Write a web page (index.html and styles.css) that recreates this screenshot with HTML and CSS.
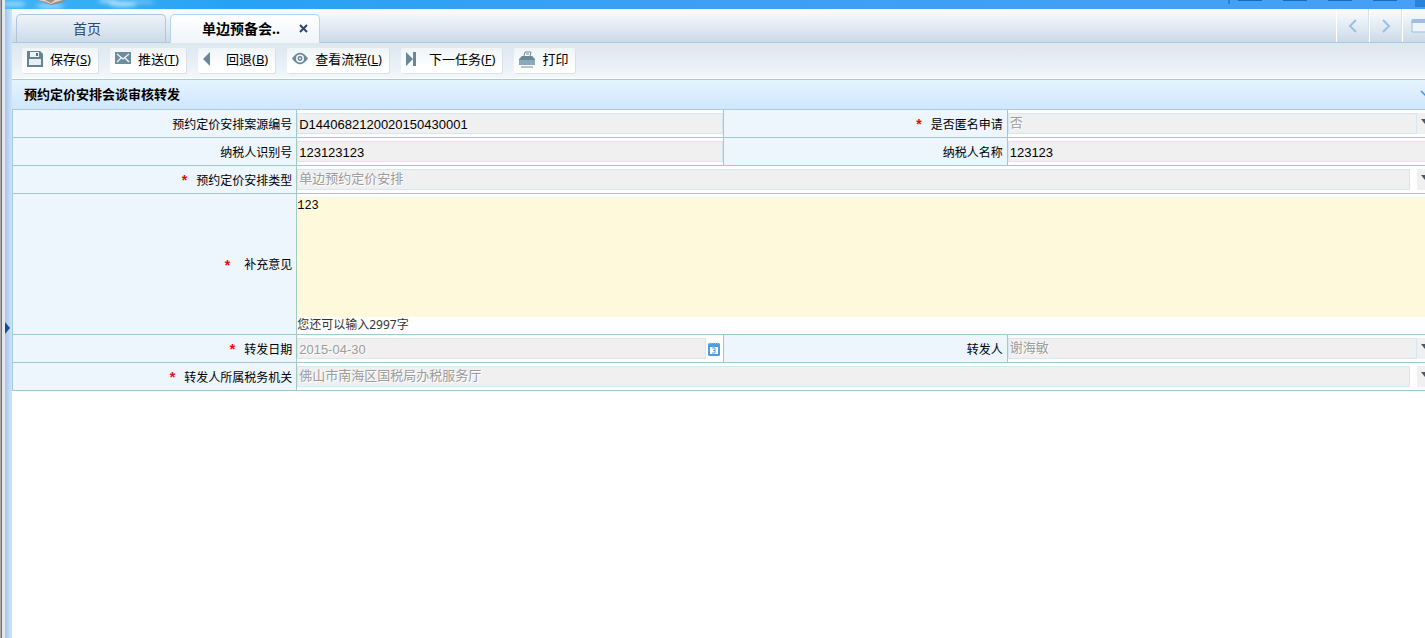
FILE: index.html
```html
<!DOCTYPE html>
<html lang="zh-CN">
<head>
<meta charset="utf-8">
<title>预约定价安排会谈审核转发</title>
<link rel="stylesheet" href="styles.css">
</head>
<body>
<div class="edge"></div>
<div class="app">
  <header class="banner">
    <svg class="banner-sky" width="330" height="9" viewBox="0 0 330 9" aria-hidden="true">
      <defs><filter id="soft" x="-20%" y="-80%" width="140%" height="260%"><feGaussianBlur stdDeviation="2"/></filter></defs>
      <g filter="url(#soft)" fill="#a9defb"><ellipse cx="9" cy="4" rx="12" ry="2"/><ellipse cx="45" cy="6" rx="14" ry="2"/><ellipse cx="103" cy="1" rx="10" ry="2"/><ellipse cx="118" cy="4" rx="14" ry="3"/><ellipse cx="138" cy="2" rx="12" ry="2" opacity=".5"/></g>
      <path d="M31 0h30l-6 3-9 2-8-3z" fill="#8b8d8d"/><path d="M33 0h25l-7 2-5 2-5-2z" fill="#d9d2c9"/><path d="M40 0h10l-4 3z" fill="#a18c7a"/>
    </svg>
    <svg class="banner-tools" width="197" height="9" viewBox="0 0 197 9" aria-hidden="true"><path d="M1 0v4" stroke="#0a67bd"/><path d="M10 0h24M55 0h24M100 0h24M145 0h24" stroke="#146cc0" stroke-width="2"/><path d="M187 0h10v7h-10z" fill="#2684da"/></svg>
  </header>
  <div class="body">
    <div class="splitter"><button class="splitter-handle" aria-label="展开侧栏"></button></div>
    <main class="content">
      <nav class="tabs">
        <button class="tab tab-home">首页</button>
        <div class="tab tab-active"><span>单边预备会..</span>
          <button class="tab-close" aria-label="关闭"><svg width="9" height="9" viewBox="0 0 9 9"><path d="M1 1l7 7M8 1l-7 7" stroke="#34436b" stroke-width="2"/></svg></button>
        </div>
        <div class="tab-tools">
          <button class="tab-tool" aria-label="向左"><svg width="10" height="14" viewBox="0 0 10 14"><path d="M8 1L2 7l6 6" fill="none" stroke="#9dbfe0" stroke-width="2"/></svg></button>
          <button class="tab-tool" aria-label="向右"><svg width="10" height="14" viewBox="0 0 10 14"><path d="M2 1l6 6-6 6" fill="none" stroke="#9dbfe0" stroke-width="2"/></svg></button>
          <button class="tab-tool" aria-label="窗口"><svg width="16" height="14" viewBox="0 0 16 14"><path d="M1 2h14v11H1z" fill="#eef4fa" stroke="#9dbfe0" stroke-width="1"/><path d="M1 0h14l1 4H0z" fill="#9dbfe0"/></svg></button>
        </div>
      </nav>
      <div class="toolbar">
        <button class="tool"><svg width="17" height="17" viewBox="0 0 17 17"><path d="M0 0h13l3 3v13H0z" fill="#678291"/><path d="M2 8h12v6H2z" fill="#e6eff4"/><path d="M3 1h9v5H3z" fill="#edf4f7"/><path d="M9 2h2v3H9z" fill="#526d7d"/></svg><span>保存(<u>S</u>)</span></button>
        <button class="tool"><svg width="17" height="17" viewBox="0 0 17 17"><path d="M0 1h16v12H0z" fill="#6d8c9e"/><path d="M2 3l6 5 6-5M2 11l4-4M14 11l-4-4" fill="none" stroke="#eef5f8" stroke-width="1.3"/></svg><span>推送(<u>T</u>)</span></button>
        <button class="tool"><svg width="17" height="17" viewBox="0 0 17 17"><path d="M7 1v14L0 8z" fill="#688798"/></svg><span>回退(<u>B</u>)</span></button>
        <button class="tool"><svg width="17" height="17" viewBox="0 0 17 17"><path d="M0 7.500Q8-4 16 7.500 8 19 0 7.500z" fill="#6d899a"/><circle cx="8" cy="7.500" r="4" fill="#f2f7fa"/><circle cx="8" cy="7.500" r="2.400" fill="#617e90"/><circle cx="8" cy="7.500" r="1" fill="#fff"/></svg><span>查看流程(<u>L</u>)</span></button>
        <button class="tool"><svg width="17" height="17" viewBox="0 0 17 17"><path d="M0 1v14l7-7V1h3v14H7V8L0 1z" fill="#688798"/></svg><span>下一任务(<u>F</u>)</span></button>
        <button class="tool"><svg width="17" height="17" viewBox="0 0 17 17"><path d="M5 5l1-4h6l-1 4" fill="#fff" stroke="#708996"/><path d="M7 3h3" stroke="#708996"/><path d="M3 5h10l3 3v6H0V8z" fill="#8aa9ba"/><path d="M3 5h10l3 4H0z" fill="#67879a"/><path d="M2 16h12" stroke="#708996"/></svg><span>打印</span></button>
      </div>
      <section class="panel">
        <header class="panel-head"><h1 class="panel-title">预约定价安排会谈审核转发</h1>
          <svg class="panel-toggle" width="14" height="8" viewBox="0 0 14 8" aria-hidden="true"><path d="M1 1l6 6 6-6" fill="none" stroke="#3e95dc" stroke-width="1.500"/></svg></header>
        <form class="form">
          <div class="label"><label for="caseno">预约定价安排案源编号</label></div>
          <div class="cell"><input class="field" id="caseno" value="D1440682120020150430001" readonly></div>
          <div class="label"><i class="star">*</i><label for="anon">是否匿名申请</label></div>
          <div class="cell"><select class="field pick" id="anon" disabled><option>否</option></select><span class="arrow"></span></div>

          <div class="label"><label for="taxid">纳税人识别号</label></div>
          <div class="cell"><input class="field" id="taxid" value="123123123" readonly></div>
          <div class="label"><label for="taxname">纳税人名称</label></div>
          <div class="cell"><input class="field" id="taxname" value="123123" readonly></div>

          <div class="label"><i class="star">*</i><label for="kind">预约定价安排类型</label></div>
          <div class="cell cell-wide"><select class="field pick" id="kind" disabled><option>单边预约定价安排</option></select><span class="arrow"></span></div>

          <div class="label label-note"><i class="star">*</i><label for="note">补充意见</label></div>
          <div class="cell cell-note"><textarea class="note" id="note">123</textarea><p class="hint">您还可以输入2997字</p></div>

          <div class="label"><i class="star">*</i><label for="date">转发日期</label></div>
          <div class="cell cell-date"><input class="field field-off" id="date" value="2015-04-30" disabled>
            <svg width="12" height="14" viewBox="0 0 12 14" aria-hidden="true"><rect x="0" y="1" width="12" height="13" rx="1.500" fill="#4f9ee0"/><path d="M2 5h8v7H2z" fill="#fff"/><path d="M1 1h1M3 1h1M5 1h1M7 1h1M9 1h1" stroke="#b9dcf6"/><path d="M4 6h3v5H4M5 8.500h2" fill="none" stroke="#4f9ee0"/></svg></div>
          <div class="label"><label for="person">转发人</label></div>
          <div class="cell"><select class="field pick" id="person" disabled><option>谢海敏</option></select><span class="arrow"></span></div>

          <div class="label"><i class="star">*</i><label for="office">转发人所属税务机关</label></div>
          <div class="cell cell-wide"><select class="field pick" id="office" disabled><option>佛山市南海区国税局办税服务厅</option></select><span class="arrow"></span></div>
        </form>
      </section>
    </main>
  </div>
</div>
</body>
</html>
```

FILE: styles.css
```css
* { box-sizing: border-box; }
body {
  margin: 0;
  min-height: 100vh;
  display: flex;
  overflow: hidden;
  background: #fff;
  color: #000;
  font: 12px/16px "Noto Sans", "Noto Sans CJK SC", sans-serif;
}
button, input, select, textarea { margin: 0; font: inherit; color: inherit; border-radius: 0; }
button { border: 0; padding: 0; background: none; }
svg { display: block; flex: none; }

.edge { width: 5px; flex: none; background: linear-gradient(90deg, #aaa 0 1px, #6e6e6e 1px 2px, #e4e8ec 2px 5px); }
.app { flex: 1; min-width: 0; display: flex; flex-direction: column; }
.banner {
  height: 9px;
  display: flex;
  justify-content: space-between;
  background: linear-gradient(90deg, #3eb4f5, #27a2f3 16%, #3ba0f4 45%, #489ff5);
}
.body { flex: 1; display: flex; min-height: 0; }
.splitter {
  width: 7px;
  flex: none;
  display: flex;
  align-items: center;
  padding-top: 8px;
  background: linear-gradient(90deg, #a5c7ed, #cfe4fb);
}
.splitter-handle {
  border: 6px solid transparent;
  border-left: 5px solid #13508f;
  border-right: 0;
}
.content { flex: 1; min-width: 0; overflow: hidden; }

.tabs {
  height: 34px;
  display: flex;
  align-items: flex-end;
  gap: 4px;
  padding-left: 4px;
  border-bottom: 1px solid #abc8e4;
  background: linear-gradient(#fafdff, #cbdae7);
}
.tab {
  width: 150px;
  height: 28px;
  display: flex;
  align-items: center;
  justify-content: center;
  border: 1px solid #b0c4dd;
  border-bottom: 0;
  border-radius: 5px 5px 0 0;
  background: linear-gradient(#eef3f7, #cbdbe9);
  color: #33476e;
  font-size: 14px;
}
.tab-home { padding-right: 8px; }
.tab-active {
  height: 29px;
  margin-bottom: -1px;
  gap: 19px;
  padding-left: 20px;
  border-color: #b7d3ef;
  background: linear-gradient(#fff, #f0f4f8);
  color: #000;
  font-weight: bold;
}
.tab-close { padding-bottom: 2px; }
.tab-tools { display: flex; align-self: stretch; margin: 0 -10px 0 auto; }
.tab-tool {
  width: 33px;
  display: grid;
  place-items: center;
  border-left: 1px solid #fff;
  border-right: 1px solid #d3e1f0;
}

.toolbar {
  height: 36px;
  display: flex;
  align-items: flex-start;
  gap: 12px;
  padding: 5px 10px;
  border-bottom: 1px solid #fff;
  background: linear-gradient(#dce7ee, #e8eff7 60%, #f2f8fb);
}
.tool {
  height: 25px;
  display: flex;
  align-items: center;
  gap: 6px;
  padding: 0 7px 3px 5px;
  border-radius: 2px;
  background: linear-gradient(#eff4f7, #fff 80%);
  box-shadow: 1px 1px 0 #dbe0e5;
  font-size: 13px;
  white-space: nowrap;
}

.panel { margin-right: -9px; }
.panel-head {
  height: 31px;
  display: flex;
  align-items: center;
  justify-content: space-between;
  padding: 0 0 2px 12px;
  border: solid #aac9e6;
  border-width: 1px 0;
  background: linear-gradient(#e6f3ff, #cfe6fc);
}
.panel-title { margin: 0; font-size: 13px; line-height: 20px; }

.form { display: grid; grid-template-columns: 20fr 30fr 20fr 30fr; border-left: 1px solid #a4cbe0; }
.label, .cell { min-width: 0; min-height: 28px; border: solid #9fcbc4; border-width: 0 1px 1px 0; display: flex; align-items: center; }
.label { justify-content: flex-end; gap: 9px; padding: 2px 4px 0 0; background: #edf5fd; }
.label-note { gap: 14px; }
.star { color: red; font: bold 14px/14px "Liberation Sans", sans-serif; padding-bottom: 1px; }
.cell { align-items: stretch; padding: 3px 0; }
.cell-wide, .cell-note { grid-column: span 3; }
.field {
  flex: 1;
  min-width: 0;
  height: 21px;
  padding: 1px 1px 0;
  border: 1px solid #d6e7f2;
  background: #f0f0f0;
  font: 13px/18px "Liberation Sans", "Noto Sans CJK SC", sans-serif;
}
.field-off, .pick { color: #9c9c9c; opacity: 1; text-shadow: 1px 1px 0 #fff; }
.pick { appearance: none; padding: 0 1px 2px; line-height: 17px; }
.arrow { width: 16px; height: 21px; flex: none; padding: 6px 4px; background: #f0f0f0; }
.arrow::before { content: ""; display: block; width: 9px; border: solid transparent; border-width: 5px 4px 0; border-top-color: #4c5664; }
.cell-wide { gap: 7px; }
.cell-note { flex-direction: column; padding-bottom: 2px; }
.note {
  width: 100%;
  height: 120px;
  padding: 2px 0;
  border: 0;
  resize: none;
  background: #fff9dc;
  font: 12px/14px "Liberation Mono", monospace;
}
.hint { margin: 0; line-height: 15px; color: #333; }
.cell-date { gap: 2px; align-items: center; padding-right: 3px; }
```
